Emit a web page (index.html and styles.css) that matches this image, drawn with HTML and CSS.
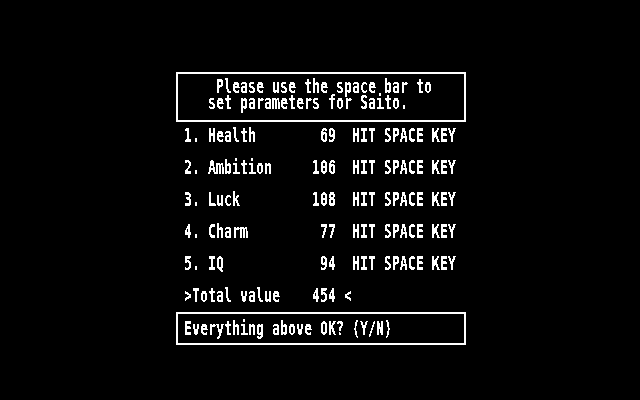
FILE: index.html
```html
<!DOCTYPE html>
<html lang="en">
<head>
  <meta charset="UTF-8">
  <title>Set Parameters</title>
  <link rel="stylesheet" href="styles.css">
</head>
<body>

  <!-- hard-edged text, like the old 8x8 screen font -->
  <svg class="defs" width="0" height="0">
    <filter id="crisp">
      <feComponentTransfer>
        <feFuncA type="discrete" tableValues="0 1"/>
      </feComponentTransfer>
    </filter>
  </svg>

  <div class="screen">
    <div class="box prompt">
      <div class="line"><span> Please use the space bar to</span></div>
      <div class="line"><span>set parameters for Saito.</span></div>
    </div>

    <div class="stats">
      <div class="row"><span class="name">1. Health</span><span class="num">69</span><span class="key">HIT SPACE KEY</span></div>
      <div class="row"><span class="name">2. Ambition</span><span class="num">106</span><span class="key">HIT SPACE KEY</span></div>
      <div class="row"><span class="name">3. Luck</span><span class="num">108</span><span class="key">HIT SPACE KEY</span></div>
      <div class="row"><span class="name">4. Charm</span><span class="num">77</span><span class="key">HIT SPACE KEY</span></div>
      <div class="row"><span class="name">5. IQ</span><span class="num">94</span><span class="key">HIT SPACE KEY</span></div>
      <div class="row total"><span class="name">&gt;Total value</span><span class="num">454</span><span class="mark">&lt;</span></div>
    </div>

    <div class="box confirm">
      <div class="line"><span>Everything above OK? (Y/N)</span></div>
    </div>
  </div>

</body>
</html>
```

FILE: styles.css
```css
body {
  margin: 0;
  background: #000;
  color: #fff;
  font-family: "DejaVu Sans Mono", monospace;
  font-size: 13.29px;
  font-weight: bold;
  line-height: 16px;
}
.defs {
  position: absolute;
}
.screen {
  width: 290px;
  margin: 72px 0 0 176px;
  filter: url(#crisp);
}
.box {
  border: 2px solid #fff;
  box-sizing: border-box;
}
.prompt {
  height: 50px;
  padding: 5px 0 0 30px;
}
.confirm {
  height: 33px;
  padding: 7px 0 0 6px;
}
.line,
.row {
  display: flex;
  height: 16px;
  align-items: center;
  white-space: pre;
}
/* stretch the glyphs to the tall 8x16 cell */
.line span,
.row span {
  display: inline-block;
  line-height: 10px;
  transform: scaleY(1.4);
}
.stats {
  padding: 6px 0 0 8px;
}
.row {
  margin-bottom: 16px;
}
.row.total {
  margin-bottom: 8px;
}
.name {
  width: 16ch;
}
.num {
  width: 3ch;
  text-align: right;
}
.key {
  margin-left: 2ch;
}
.mark {
  margin-left: 1ch;
}
```
